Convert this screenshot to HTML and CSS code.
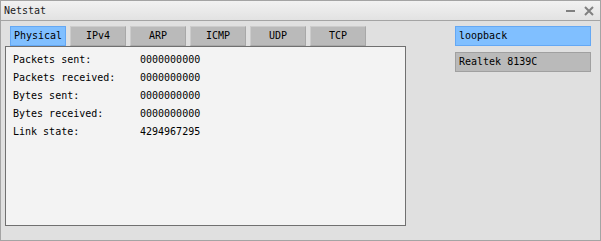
FILE: index.html
```html
<!DOCTYPE html>
<html lang="en">
<head>
    <meta charset="UTF-8">
    <title>Netstat</title>
    <link rel="stylesheet" href="styles.css">
</head>
<body>
    <div class="window">
        <div class="titlebar">
            <span class="title">Netstat</span>
            <div class="title-buttons">
                <svg class="btn-min" width="10" height="10" viewBox="0 0 10 10">
                    <rect x="0" y="4" width="9" height="2" fill="#808080"/>
                </svg>
                <svg class="btn-close" width="10" height="10" viewBox="0 0 10 10">
                    <path d="M1 1 L9 9 M9 1 L1 9" stroke="#808080" stroke-width="2"/>
                </svg>
            </div>
        </div>
        <div class="content">
            <div class="left-col">
                <div class="tabs">
                    <div class="tab active">Physical</div>
                    <div class="tab">IPv4</div>
                    <div class="tab">ARP</div>
                    <div class="tab">ICMP</div>
                    <div class="tab">UDP</div>
                    <div class="tab">TCP</div>
                </div>
                <div class="panel">
                    <div class="row"><span class="label">Packets sent:</span><span class="value">0000000000</span></div>
                    <div class="row"><span class="label">Packets received:</span><span class="value">0000000000</span></div>
                    <div class="row"><span class="label">Bytes sent:</span><span class="value">0000000000</span></div>
                    <div class="row"><span class="label">Bytes received:</span><span class="value">0000000000</span></div>
                    <div class="row"><span class="label">Link state:</span><span class="value">4294967295</span></div>
                </div>
            </div>
            <div class="iface-list">
                <div class="iface selected">loopback</div>
                <div class="iface">Realtek 8139C</div>
            </div>
        </div>
    </div>
</body>
</html>
```

FILE: styles.css
```css
* {
    margin: 0;
    padding: 0;
    box-sizing: border-box;
}

body {
    font-family: "DejaVu Sans Mono", "Liberation Mono", monospace;
    font-size: 10px;
    color: #000;
    background-color: #e0e0e0;
}

.window {
    width: 601px;
    height: 241px;
    border: 1px solid #a4a4a4;
    background-color: #e0e0e0;
    display: flex;
    flex-direction: column;
}

.titlebar {
    height: 20px;
    border-bottom: 1px solid #a4a4a4;
    background: linear-gradient(#f2f2f2, #e2e2e2);
    display: flex;
    align-items: center;
    justify-content: space-between;
    padding: 0 6px 0 3px;
}

.title {
    color: #202020;
}

.title-buttons {
    display: flex;
    gap: 8px;
    align-items: center;
}

.content {
    display: flex;
    justify-content: space-between;
    padding: 5px 9px 0 4px;
}

.tabs {
    display: flex;
    gap: 4px;
    padding-left: 5px;
}

.tab {
    width: 56px;
    height: 20px;
    line-height: 18px;
    text-align: center;
    background-color: #bababa;
    border: 1px solid #a8a8a8;
    border-top-color: #cccccc;
    border-left-color: #cccccc;
}

.tab.active {
    background-color: #80bfff;
    border-color: #64a8f4;
}

.panel {
    width: 401px;
    height: 180px;
    background-color: #f3f3f3;
    border: 1px solid #707070;
    padding: 4px 7px;
}

.row {
    display: flex;
    height: 18px;
    line-height: 18px;
}

.label {
    width: 127px;
}

.iface-list {
    width: 136px;
    display: flex;
    flex-direction: column;
    gap: 6px;
}

.iface {
    height: 20px;
    line-height: 18px;
    padding-left: 3px;
    background-color: #bababa;
    border: 1px solid #a0a0a0;
}

.iface.selected {
    background-color: #80bfff;
    border-color: #64a8f4;
}
```
